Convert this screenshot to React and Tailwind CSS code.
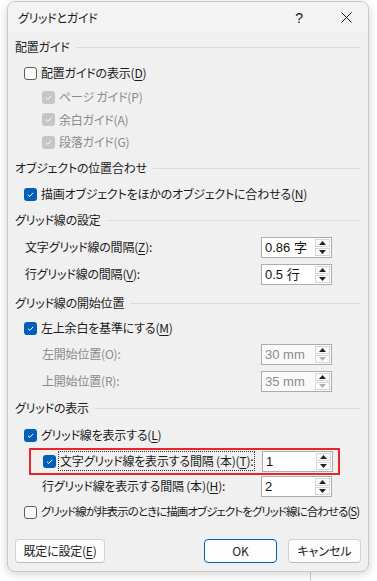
import React from "react";

const font = "[font-family:'Noto_Sans_CJK_JP','Noto_Sans',sans-serif] [font-feature-settings:'palt']";

const Check = ({ checked, disabled }) => {
  if (!checked) {
    return <span className="w-[13px] h-[13px] shrink-0 rounded-[3px] border border-[#5c5c5c] bg-[#fbfbfb]" />;
  }
  return (
    <span
      className={
        "w-[13px] h-[13px] shrink-0 rounded-[3px] flex items-center justify-center " +
        (disabled ? "bg-[#c6c6c6]" : "bg-[#005fb8]")
      }
    >
      <svg width="9" height="9" viewBox="0 0 9 9">
        <path d="M2 4.7 L3.8 6.4 L7.2 2.8" fill="none" stroke="white" strokeWidth="1" />
      </svg>
    </span>
  );
};

const Label = ({ text, k, after = "", disabled, tight }) => (
  <span
    className={
      "whitespace-nowrap " +
      (tight ? "text-[11.5px] tracking-[-0.95px] " : "tracking-[-0.2px] ") +
      (disabled ? "text-[#8a8a8a]" : "text-[#1b1b1b]")
    }
  >
    {text}(<span className={disabled ? "" : "underline underline-offset-2"}>{k}</span>){after}
  </span>
);

const Section = ({ title, h }) => (
  <div className={"flex items-center gap-[6px] pl-[7px] pr-[7px] " + h}>
    <span className="text-[#1b1b1b] whitespace-nowrap tracking-[-0.2px]">{title}</span>
    <span className="flex-1 h-px bg-[#dadada]" />
  </div>
);

const Spin = ({ value, disabled }) => (
  <div
    className={
      "w-[71px] h-[21px] border border-[#acacac] flex items-stretch " +
      (disabled ? "bg-[#f9f9f9] text-[#8c8c8c]" : "bg-white text-[#111]")
    }
  >
    <span className="flex-1 pl-[3px] flex items-center text-[13px] [font-family:'Liberation_Sans','Noto_Sans_CJK_JP',sans-serif]">
      {value}
    </span>
    <div className="w-[16px] flex flex-col gap-px py-px pr-px">
      <span className="flex-1 border border-[#d6d6d6] bg-[#fbfbfb] flex items-center justify-center">
        <svg width="7" height="4" viewBox="0 0 7 4">
          <path d="M0 4 L3.5 0 L7 4 Z" fill="#222" />
        </svg>
      </span>
      <span className="flex-1 border border-[#d6d6d6] bg-[#fbfbfb] flex items-center justify-center">
        <svg width="7" height="4" viewBox="0 0 7 4">
          <path d="M0 0 L7 0 L3.5 4 Z" fill={disabled ? "#b0b0b0" : "#222"} />
        </svg>
      </span>
    </div>
  </div>
);

const Button = ({ children, primary, w }) => (
  <button
    className={
      "h-[24px] rounded-[4px] bg-[#fdfdfd] text-[12px] text-[#1b1b1b] flex items-center justify-center " +
      w +
      (primary ? " border border-[#005fb8]" : " border border-[#d2d2d2] border-b-[#bcbcbc]")
    }
  >
    {children}
  </button>
);

export default function App() {
  return (
    <div className={"relative w-[377px] h-[581px] bg-white overflow-hidden text-[12px] leading-none " + font}>
      <div className="absolute left-[310px] top-[560px] w-px h-[30px] bg-[#cfcfcf]" />
      <div className="absolute left-[7px] top-[1px] w-[362px] h-[571px] rounded-[8px] border border-[#c9c9c9] bg-[#f0f0f0] shadow-[0_2px_10px_rgba(0,0,0,0.18)] overflow-hidden flex flex-col">
        <div className="h-[31px] bg-[#f3f3f3] flex items-center pl-[10px] pr-[16px] shrink-0">
          <span className="flex-1 text-[12px] text-[#1b1b1b] tracking-[-0.3px]">グリッドとガイド</span>
          <span className="text-[14px] text-[#1b1b1b] mr-[38px] [font-family:'Liberation_Sans',sans-serif]">?</span>
          <svg width="11" height="11" viewBox="0 0 11 11">
            <path d="M0.5 0.5 L10.5 10.5 M10.5 0.5 L0.5 10.5" stroke="#1b1b1b" strokeWidth="1" />
          </svg>
        </div>

        <Section title="配置ガイド" h="h-[28px]" />
        <div className="h-[24px] flex items-center gap-[4px] pl-[16px]">
          <Check />
          <Label text="配置ガイドの表示" k="D" />
        </div>
        <div className="h-[24px] flex items-center gap-[4px] pl-[34px]">
          <Check checked disabled />
          <Label text="ページ ガイド" k="P" disabled />
        </div>
        <div className="h-[21px] flex items-center gap-[4px] pl-[34px]">
          <Check checked disabled />
          <Label text="余白ガイド" k="A" disabled />
        </div>
        <div className="h-[24px] flex items-center gap-[4px] pl-[34px]">
          <Check checked disabled />
          <Label text="段落ガイド" k="G" disabled />
        </div>

        <Section title="オブジェクトの位置合わせ" h="h-[28px]" />
        <div className="h-[24px] flex items-center gap-[4px] pl-[16px]">
          <Check checked />
          <Label text="描画オブジェクトをほかのオブジェクトに合わせる" k="N" />
        </div>

        <Section title="グリッド線の設定" h="h-[28px]" />
        <div className="h-[26px] flex items-center justify-between pl-[17px] pr-[36px]">
          <Label text="文字グリッド線の間隔" k="Z" after=":" />
          <Spin value="0.86 字" />
        </div>
        <div className="h-[28px] flex items-center justify-between pl-[17px] pr-[36px]">
          <Label text="行グリッド線の間隔" k="V" after=":" />
          <Spin value="0.5 行" />
        </div>

        <Section title="グリッド線の開始位置" h="h-[30px]" />
        <div className="h-[20px] flex items-center gap-[4px] pl-[16px]">
          <Check checked />
          <Label text="左上余白を基準にする" k="M" />
        </div>
        <div className="h-[32px] flex items-center justify-between pl-[34px] pr-[36px]">
          <Label text="左開始位置" k="O" after=":" disabled />
          <Spin value="30 mm" disabled />
        </div>
        <div className="h-[22px] flex items-center justify-between pl-[34px] pr-[36px]">
          <Label text="上開始位置" k="R" after=":" disabled />
          <Spin value="35 mm" disabled />
        </div>

        <Section title="グリッドの表示" h="h-[32px]" />
        <div className="h-[22px] flex items-center gap-[4px] pl-[16px]">
          <Check checked />
          <Label text="グリッド線を表示する" k="L" />
        </div>
        <div className="h-[30px] flex items-center pl-[21px] pr-[28px]">
          <div className="flex-1 h-[27px] border-2 border-[#e8242c] flex items-center justify-between pl-[12px] pr-[5px]">
            <div className="flex items-center gap-[2px]">
              <Check checked />
              <span className="border border-dotted border-[#333] px-[1px] py-[3px]">
                <Label text="文字グリッド線を表示する間隔 (本)" k="T" after=":" />
              </span>
            </div>
            <Spin value="1" />
          </div>
        </div>
        <div className="h-[20px] flex items-center justify-between pl-[34px] pr-[36px]">
          <Label text="行グリッド線を表示する間隔 (本)" k="H" after=":" />
          <Spin value="2" />
        </div>
        <div className="h-[32px] flex items-center gap-[4px] pl-[16px]">
          <Check />
          <Label tight text="グリッド線が非表示のときに描画オブジェクトをグリッド線に合わせる" k="S" />
        </div>

        <div className="flex items-center pl-[7px] pr-[7px] mt-[11px]">
          <Button w="w-[90px]">
            <Label text="既定に設定" k="E" />
          </Button>
          <div className="flex-1" />
          <Button primary w="w-[73px]">OK</Button>
          <div className="w-[11px]" />
          <Button w="w-[73px]">キャンセル</Button>
        </div>
      </div>
    </div>
  );
}
